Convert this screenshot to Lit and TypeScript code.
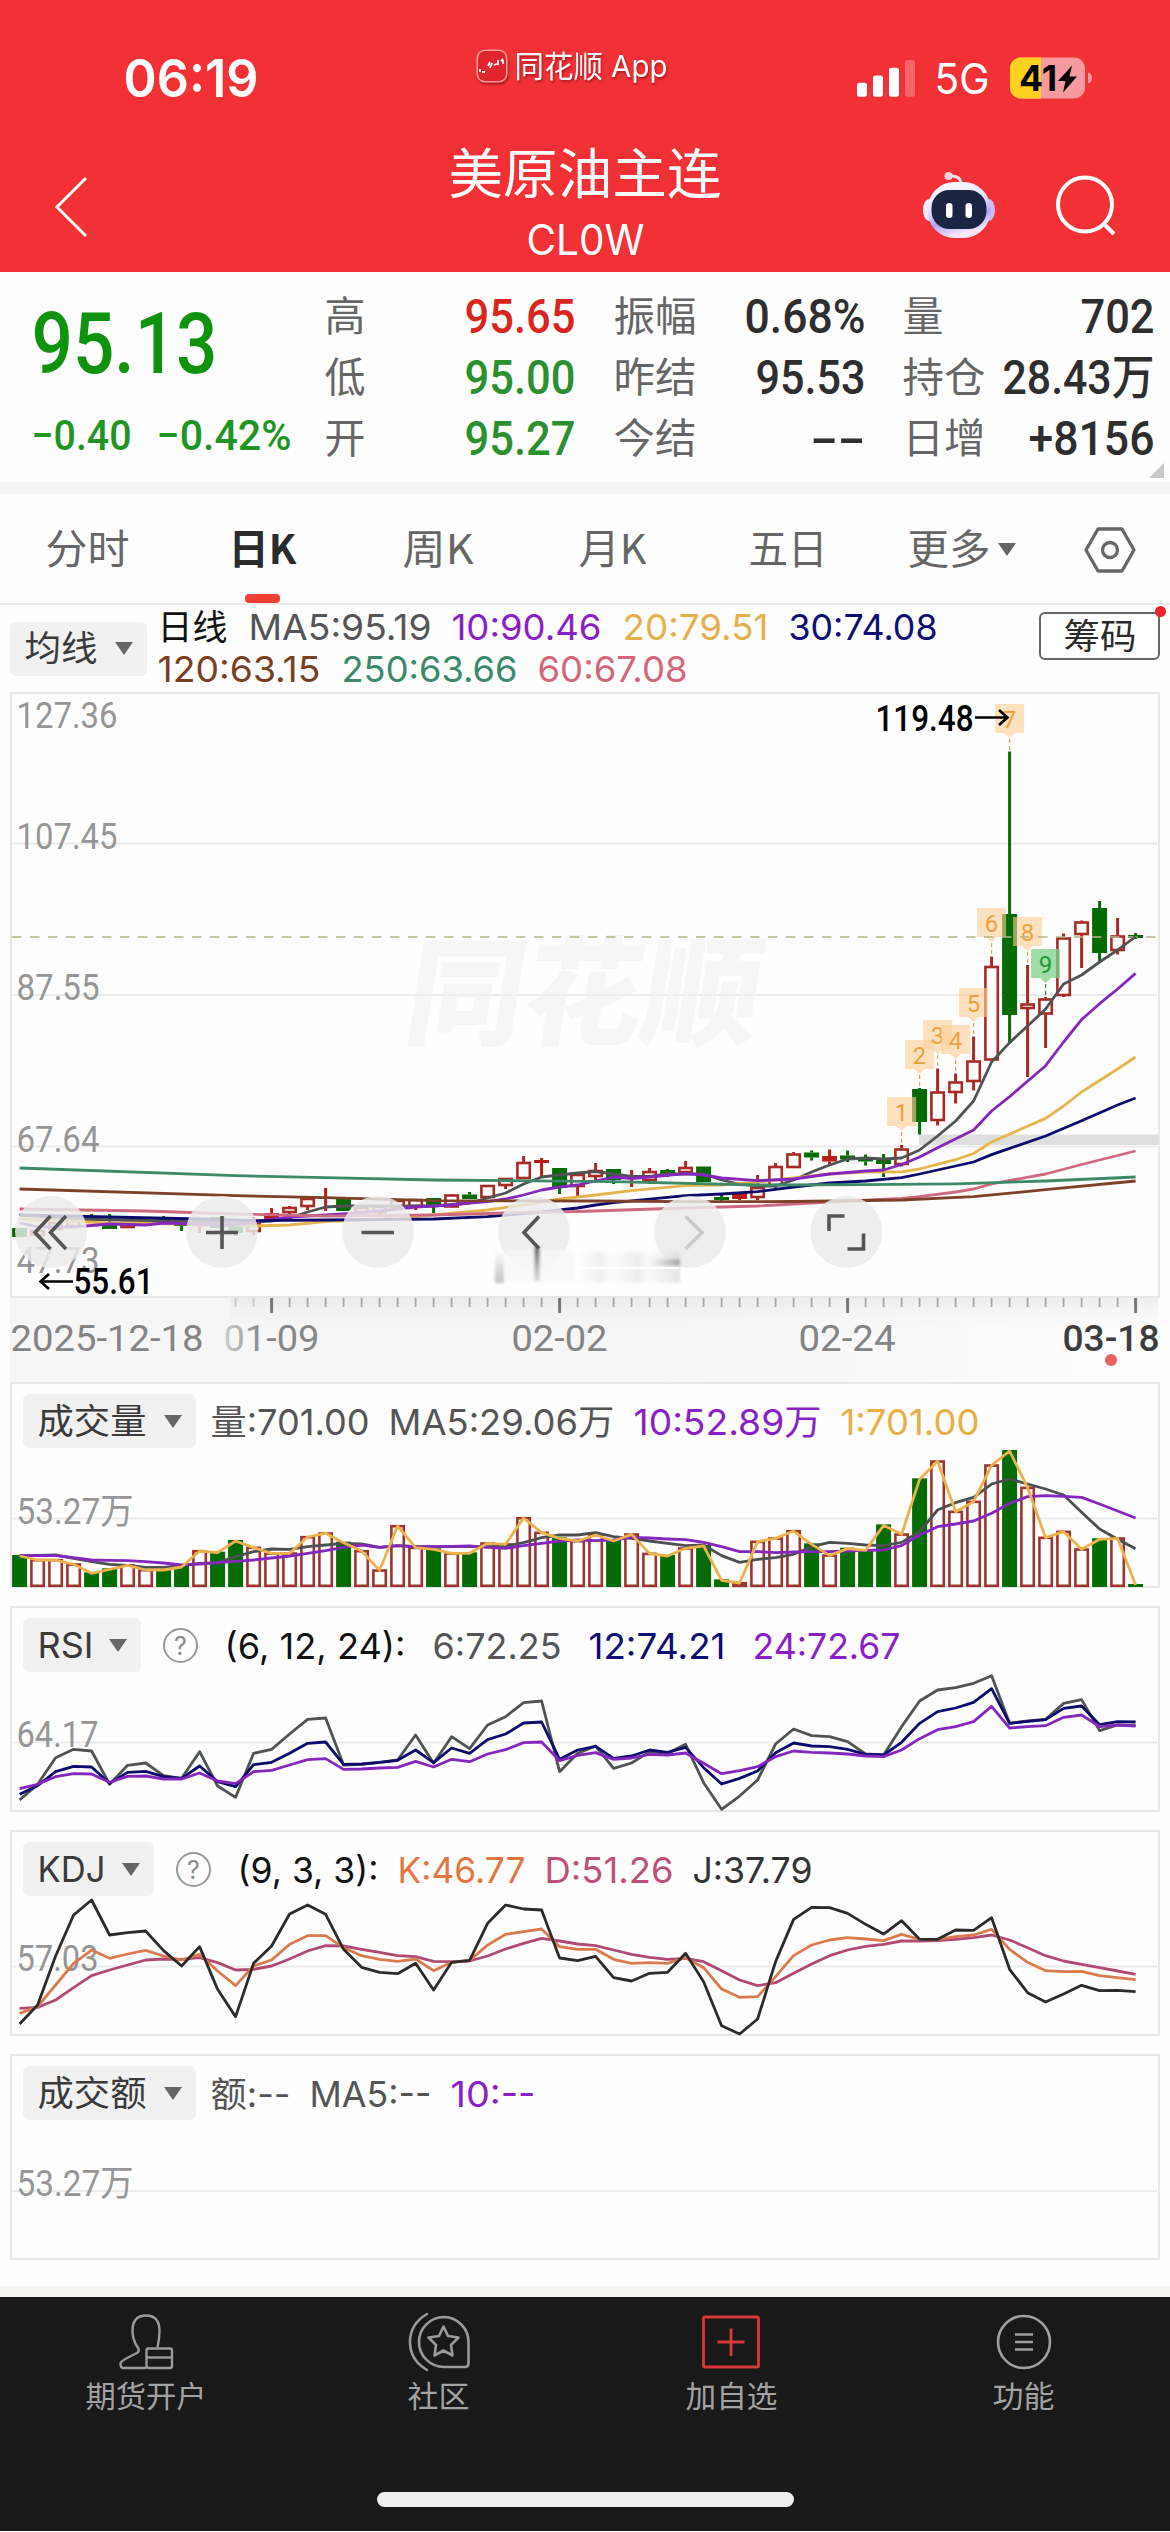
import { LitElement, html, svg, css, nothing } from "lit";
import { customElement } from "lit/decorators.js";

/* ---------- data ---------- */

type Candle = [kind: "r" | "f" | "g", top: number, bottom: number, high: number, low: number];
type Pt = [number, number];

const X0 = 19.6;
const STEP = 18;
const xAt = (i: number) => X0 + STEP * i;

// r = hollow rising bar, f = filled rising bar, g = falling bar
const CANDLES: Candle[] = [
  ["g", 1228, 1237, 1228, 1237], ["r", 1230, 1236, 1230, 1236], ["r", 1222, 1230, 1222, 1230], ["r", 1220, 1227, 1220, 1227],
  ["g", 1217, 1223, 1214, 1223], ["g", 1222, 1229, 1214, 1229], ["r", 1222, 1228, 1222, 1228], ["r", 1220, 1224, 1220, 1224],
  ["g", 1218, 1223, 1216, 1223], ["g", 1223, 1226, 1223, 1231], ["r", 1221, 1226, 1221, 1233], ["g", 1217, 1228, 1217, 1228],
  ["g", 1223, 1233, 1223, 1236], ["r", 1223, 1232, 1217, 1235], ["f", 1213, 1219, 1208, 1219], ["r", 1207, 1213, 1206, 1217],
  ["r", 1198, 1207, 1196, 1210], ["f", 1197, 1199, 1188, 1211], ["g", 1197, 1211, 1197, 1211], ["r", 1207, 1213, 1205, 1213],
  ["r", 1206, 1213, 1206, 1215], ["r", 1200, 1208, 1200, 1208], ["r", 1199, 1207, 1199, 1210], ["g", 1198, 1207, 1198, 1213],
  ["r", 1194.5, 1207.5, 1194, 1208], ["g", 1194.5, 1199, 1192, 1199], ["r", 1185, 1198, 1185, 1198], ["r", 1178, 1186, 1178, 1189],
  ["r", 1162, 1179, 1156, 1179], ["f", 1160, 1163, 1158, 1177], ["g", 1168, 1188, 1168, 1194], ["r", 1174, 1187, 1174, 1196],
  ["r", 1170, 1177, 1163, 1181], ["g", 1169, 1180, 1169, 1184], ["f", 1177, 1179, 1170, 1187], ["r", 1171, 1181, 1168, 1184],
  ["g", 1170, 1174, 1169, 1177], ["r", 1167, 1173, 1161, 1173], ["g", 1166.5, 1182, 1166.5, 1182], ["g", 1197, 1200, 1195, 1202],
  ["f", 1193, 1199, 1193, 1200], ["r", 1187, 1198, 1175, 1200], ["r", 1166, 1186, 1163, 1188], ["r", 1153.5, 1168, 1152, 1168],
  ["g", 1152.5, 1157.5, 1150.5, 1160.5], ["f", 1156, 1161.5, 1149.5, 1164.5], ["g", 1155.5, 1159.5, 1150.5, 1162], ["g", 1157.5, 1161.5, 1154.5, 1165.5],
  ["g", 1159.5, 1164, 1154, 1177], ["r", 1148.5, 1165, 1145, 1166.5], ["g", 1089, 1122, 1088, 1134.5], ["r", 1091.5, 1121, 1068.5, 1125.5],
  ["r", 1081.5, 1093, 1073.5, 1103.5], ["r", 1060.5, 1082, 1036.5, 1090.5], ["r", 966, 1060.5, 956.5, 1061], ["g", 914, 1015, 751.5, 1043],
  ["r", 1003.5, 1009, 965, 1077], ["r", 998.5, 1014.5, 997, 1048], ["r", 937.5, 996, 933.5, 997], ["r", 921.5, 935, 920.5, 968],
  ["g", 908, 953, 901, 961], ["r", 935.5, 951, 918, 954.5], ["g", 935, 938, 933, 939],
];

const MA_LINES: { color: string; pts: Pt[] }[] = [
  { color: "#505353", pts: [[0,1215],[3,1219],[8,1221],[12,1223],[14,1221],[15,1218],[16,1212],[17,1207],[18,1206],[21,1206],[23,1206],[25,1203],[26,1198],[27,1193],[28,1184],[29,1177],[30,1175],[31,1173],[32,1171.5],[33,1174],[34,1176.5],[35,1176.5],[36,1174],[38,1174],[39,1180],[40,1184],[41,1186],[42,1186],[43,1180],[44,1172],[45,1165],[46,1159],[47,1158],[48,1159],[49,1158],[50,1150],[51,1136],[52,1121],[53,1101],[54,1062],[55,1042.6],[56,1026],[57,1009],[58,984],[59,975],[60,962],[61,950],[62,936.6]] },
  { color: "#e6b54e", pts: [[0,1219],[5,1223],[10,1224],[13,1226],[15,1225],[17,1221.7],[21,1218],[23,1215],[26,1210],[28,1205],[30,1199],[32,1195],[34,1190.7],[37,1185.7],[39,1185],[41,1182],[43,1178],[45,1174],[47,1172],[49,1171.8],[50,1169],[52,1159.7],[53,1153.5],[54,1142],[57,1118.4],[58,1106],[59,1092],[61,1069],[62,1057]] },
  { color: "#8527bd", pts: [[0,1223],[1,1226.7],[3,1227],[5,1224],[7,1225],[8,1223],[10,1224],[12,1225],[13,1222],[15,1217],[17,1215],[19,1212.7],[21,1209],[22,1207],[24,1205],[25,1203],[26,1201.7],[27,1199],[28,1195],[29,1190],[30,1187],[31,1185],[32,1181],[33,1177],[34,1178.5],[35,1177],[37,1173.7],[38,1175],[39,1178],[41,1180.7],[43,1179],[45,1174],[47,1171],[48,1170],[49,1164.5],[50,1157],[51,1147.7],[53,1130],[54,1111],[55,1096.7],[57,1065.7],[58,1042],[59,1019.6],[60,1003.7],[61,989],[62,973.4]] },
  { color: "#0d0b6b", pts: [[0,1215],[5,1217],[10,1219],[13,1220.7],[17,1220],[23,1219],[26,1216.7],[29,1212],[31,1208],[32,1205],[33,1202.7],[37,1195.7],[39,1194],[41,1191.7],[43,1187],[45,1183],[47,1181],[49,1177.7],[50,1174],[52,1166],[53,1162],[54,1154.6],[57,1136],[59,1120.8],[61,1105],[62,1098]] },
  { color: "#cd6a7f", pts: [[0,1209],[7,1211],[12,1214],[17,1216],[23,1215],[27,1213],[31,1211.5],[37,1208],[41,1206],[45,1202],[49,1198.5],[50,1196.6],[52,1192],[53,1189],[54,1183.8],[57,1174],[59,1164.5],[62,1151]] },
  { color: "#7e4128", pts: [[0,1189],[12,1195.7],[17,1197.7],[23,1200.7],[32,1201],[37,1201.7],[43,1201.5],[47,1200.5],[49,1200],[53,1196.6],[57,1189.7],[62,1181]] },
  { color: "#3c8a68", pts: [[0,1168],[12,1175.7],[17,1177.7],[23,1180],[33,1181.7],[41,1185],[47,1184.7],[52,1183.8],[57,1181],[62,1177]] },
];

const MARKERS: [index: number, top: number, n: string][] = [
  [49, 1097, "1"], [50, 1040, "2"], [51, 1020, "3"], [52, 1025, "4"], [53, 988, "5"], [54, 908, "6"], [55, 704, "7"], [56, 917, "8"], [57, 949, "9"],
];

// Oscillator and volume samples, in thirds of a pixel below the panel's base line.
const VOL_TOPS = [525,537,537,550,577,565,553,567,567,558,510,515,480,500,517,517,468,457,485,510,568,435,500,505,517,517,487,490,411,455,472,480,462,480,460,518,525,502,495,598,606,482,472,450,490,523,503,508,433,460,295,241,392,362,253,210,320,470,452,505,475,472,612];
const VOL_MA5 = [527,526,525,535,545,553,556,562,562,556,550,548,530,515,507,508,500,495,490,492,502,497,500,500,500,500,500,498,488,473,465,465,458,470,475,483,490,497,495,527,547,538,533,523,500,487,490,495,497,487,455,390,368,352,312,297,312,327,345,397,447,478,506];
const VOL_MA10 = [527,527,527,533,540,541,542,545,549,555,552,548,544,540,534,528,520,512,502,495,502,497,500,500,499,498,502,505,497,490,483,480,482,480,472,474,477,479,487,500,515,515,518,516,515,515,513,511,510,497,465,440,432,423,400,370,350,347,349,352,372,393,414];
const RSI6 = [600,553,473,448,453,553,496,489,527,535,455,558,592,460,448,402,358,354,495,493,487,480,405,490,410,446,375,350,308,303,515,460,438,505,489,455,460,433,548,628,588,540,432,387,407,410,425,462,465,380,303,270,263,250,227,370,363,358,310,299,392,375,377];
const RSI12 = [583,557,515,499,501,550,517,514,530,535,498,545,560,494,487,460,430,426,493,492,487,481,450,488,444,460,419,402,369,366,478,450,439,475,468,450,457,442,503,552,535,513,458,429,438,440,448,463,465,427,370,335,324,307,266,370,364,359,325,318,374,365,366];
const RSI24 = [566,553,530,521,522,547,529,528,537,537,519,543,551,515,511,495,479,476,508,507,504,502,484,501,478,485,462,449,428,426,482,466,458,478,474,463,465,459,490,521,512,500,470,453,457,459,462,468,470,450,416,389,380,365,319,384,380,377,352,345,380,375,378];
const KDJ_J = [1272,1215,1068,945,900,1005,998,993,1052,1098,1040,1168,1250,1090,1038,942,915,943,1048,1102,1117,1121,1090,1170,1087,1081,970,915,927,930,1074,1082,1069,1133,1143,1120,1117,1060,1145,1277,1302,1257,1085,958,922,923,940,973,1002,962,1018,1018,990,991,953,1108,1178,1206,1182,1156,1172,1171,1175];
const KDJ_K = [1240,1220,1155,1090,1050,1075,1062,1051,1068,1080,1063,1113,1157,1098,1080,1033,1007,1007,1043,1067,1078,1084,1077,1112,1087,1082,1035,1003,995,987,1040,1048,1048,1078,1090,1088,1090,1073,1103,1167,1192,1190,1130,1067,1035,1020,1013,1017,1022,1003,1018,1018,1010,1005,988,1048,1087,1112,1115,1114,1127,1133,1139];
const KDJ_D = [1225,1222,1200,1163,1127,1110,1095,1080,1077,1078,1073,1088,1110,1108,1098,1077,1053,1037,1038,1048,1057,1067,1070,1084,1085,1083,1068,1047,1030,1015,1023,1032,1037,1050,1063,1072,1078,1075,1085,1112,1140,1157,1148,1120,1092,1067,1050,1039,1033,1023,1023,1022,1018,1013,1005,1020,1043,1067,1083,1093,1103,1113,1123];

/* ---------- drawing helpers ---------- */

/** Real text squeezed or stretched to an exact width, centred on its cap height. */
const fit = (text: string, w: number, size: number, cls = "") => {
  const h = Math.round(size * 1.1);
  return html`<svg class="fit" width=${w} height=${h} viewBox="0 0 ${w} ${h}">
    <text class=${cls} x="-1.5" y=${h / 2 + size * 0.36} font-size=${size} textLength=${w + 3} lengthAdjust="spacingAndGlyphs">${text}</text>
  </svg>`;
};

const label = (text: string, x: number, y: number, w: number, cls = "axis") =>
  svg`<text class=${cls} x=${x - 1.5} y=${y} textLength=${w + 3} lengthAdjust="spacingAndGlyphs">${text}</text>`;

const poly = (pts: Pt[], color: string) =>
  svg`<polyline class="line" stroke=${color} points=${pts.map(([i, y]) => `${xAt(i)},${y}`).join(" ")}></polyline>`;

const series = (vals: number[], base: number, color: string) =>
  poly(vals.map((v, i) => [i, base + v / 3] as Pt), color);

const canvas = (top: number, h: number, body: unknown) =>
  html`<svg class="canvas" width="1146" height=${h - 4} viewBox="12 ${top + 2} 1146 ${h - 4}">${body}</svg>`;

const GREEN = "#056b04";
const RED = "#a82a25";

const candle = ([k, t, b, hi, lo]: Candle, i: number) => {
  const x = xAt(i);
  const color = k === "g" ? GREEN : k === "f" ? "#b81d17" : RED;
  return svg`
    ${hi < t ? svg`<rect x=${x - 1.5} y=${hi} width="3" height=${t - hi} fill=${color}></rect>` : nothing}
    ${lo > b ? svg`<rect x=${x - 1.5} y=${b} width="3" height=${lo - b} fill=${color}></rect>` : nothing}
    ${k === "r"
      ? svg`<rect x=${x - 6.2} y=${t + 1} width="12.4" height=${Math.max(b - t - 2, 2)} fill="#fff" stroke=${color} stroke-width="2.6"></rect>`
      : svg`<rect x=${x - 7.5} y=${t} width="15" height=${b - t} fill=${color}></rect>`}`;
};

const marker = ([i, top, n]: [number, number, string]) => {
  const x = xAt(i);
  const green = n === "9";
  const fill = green ? "#7fd08a" : "#fbcf97";
  return svg`
    <path d="M${x - 14.5} ${top}h29v29h-9l-5.5 5l-5.5 -5h-9z" fill=${fill} opacity=${green ? 0.75 : 0.62}></path>
    <path d="M${x} ${top + 35}V${Math.max(CANDLES[i][3], top + 38)}" stroke=${green ? "#2f8f3f" : "#dba24f"} stroke-width="1.2" stroke-dasharray="4 3"></path>
    <text class="mark" x=${x} y=${top + 23.5} fill=${green ? "#1d9a35" : "#eda13d"}>${n}</text>`;
};

const chip = (text: string, w: number, textW: number) => html`
  <div class="chip" style="width:${w}px">${fit(text, textW, 35.5, "ui dark")}<i class="caret"></i></div>`;

const leg = (text: string, w: number, color: string) => html`<span style="color:${color}">${fit(text, w, 35.5, "ui")}</span>`;

/* ---------- component ---------- */

@customElement("app-root")
export class AppRoot extends LitElement {
  static styles = css`
    :host { display: block; width: 1170px; height: 2532px; overflow: hidden; background: #fefefe; font-family: Inter, "Noto Sans CJK SC", sans-serif; }
    * { box-sizing: border-box; }
    svg { display: block; flex: none; overflow: visible; }
    .ui { font-family: Inter, "Noto Sans CJK SC", sans-serif; fill: currentColor; }
    .num { font-family: Roboto, "Noto Sans CJK SC", sans-serif; fill: currentColor; font-weight: 500; }
    .cjk { font-family: "Noto Sans CJK SC", sans-serif; fill: currentColor; }
    .bold { font-weight: 700; }
    .semi { font-weight: 600; }
    .dark { fill: #3a3a3a; }
    .axis { font-family: Roboto, "Noto Sans CJK SC", sans-serif; font-size: 36px; fill: #969696; }
    .date { font-family: Roboto, sans-serif; font-size: 36px; fill: #848484; }
    .today { font-family: Roboto, sans-serif; font-size: 36px; fill: #3d3d3d; font-weight: 500; }
    .price { font-family: Roboto, sans-serif; font-size: 36px; font-weight: 500; fill: #000; }
    .mark { font-family: Roboto, sans-serif; font-size: 24px; text-anchor: middle; }
    .wm { font-family: "Noto Sans CJK SC", sans-serif; font-weight: 900; font-size: 118px; fill: #f6f6f6; }
    .line { fill: none; stroke-width: 2.8; stroke-linejoin: round; }

    header { height: 272px; background: #f13136; color: #fff; }
    .status { height: 136px; padding: 20px 0 0 125px; display: flex; align-items: center; }
    .brand { display: flex; align-items: center; gap: 8px; margin: 0 191px 24px 219px; filter: drop-shadow(1px 2px 1px rgba(90, 0, 0, 0.45)); }
    .sig { margin-right: 21px; }
    .bat { margin-left: 22px; }
    .nav { height: 136px; padding: 0 53px 0 55px; display: grid; grid-template-columns: 394px 272px 396px; align-items: center; }
    .back { margin-top: 5px; }
    .title { display: flex; flex-direction: column; align-items: center; gap: 13px; }
    .acts { display: flex; justify-content: flex-end; align-items: center; gap: 60px; padding-top: 2px; }

    .quote { height: 210px; padding: 13px 0 0 33px; display: grid; grid-template-columns: 293px 248px 249px 249px; column-gap: 0; color: #2e2e2e; position: relative; }
    .main { display: flex; flex-direction: column; color: #0f930f; padding-top: 10px; }
    .main .sub { display: flex; gap: 28px; padding-top: 22px; color: #1f9624; }
    .col { display: grid; grid-template-rows: repeat(3, 61px); }
    .col + .col { margin-left: 41px; margin-right: -41px; }
    .col.c2 { margin-left: 0; margin-right: 0; }
    .col.c4 { margin-left: 81px; margin-right: -81px; }
    .kv { display: flex; align-items: center; justify-content: space-between; }
    .k { color: #666; padding-top: 2px; }
    .up { color: #d8261f; }
    .down { color: #2b902d; }
    .corner { position: absolute; left: 1149px; top: 191px; }

    .band { height: 12px; background: #f5f5f5; }
    .tabs { height: 111px; display: grid; grid-template-columns: repeat(6, 175px) 120px; border-bottom: 2px solid #ececec; color: #666; }
    .tab { display: flex; align-items: center; justify-content: center; gap: 9px; position: relative; padding-top: 2px; }
    .on { color: #2b2b2b; }
    .bar { position: absolute; left: 70px; top: 100px; width: 35px; height: 9px; border-radius: 4px; background: #ef4034; }
    .caret { width: 0; height: 0; border: 9.5px solid transparent; border-top: 13px solid #666; border-bottom: 0; }

    .legend { height: 87px; padding-left: 10px; display: flex; align-items: center; }
    .chip { height: 54px; border-radius: 6px; background: #f1f1f1; display: flex; align-items: center; justify-content: space-between; padding: 0 14px 0 16px; flex: none; }
    .rows { width: 880px; margin-left: 12px; display: flex; flex-direction: column; gap: 3px; }
    .row { display: flex; align-items: center; gap: 23.5px; }
    .chips { position: relative; width: 121px; height: 48px; margin: -25px 0 0 0; border: 2px solid #666; border-radius: 6px; display: flex; align-items: center; justify-content: center; color: #2b2b2b; background: #fff; }
    .dot { position: absolute; right: -8px; top: -8px; width: 11px; height: 11px; border-radius: 50%; background: #e8262b; }

    .panel { position: relative; width: 1150px; margin-left: 10px; border: 2px solid #e7e7e7; }
    .canvas { position: absolute; left: 0; top: 0; }
    .chart { height: 606px; }
    .dates { width: 1150px; height: 84px; margin-left: 10px; background: linear-gradient(90deg, #f6f6f6 55%, #fdfdfd); }
    .sub-panel { height: 206px; }
    .gap { margin-top: 18px; }
    .head { position: relative; z-index: 1; display: flex; align-items: center; gap: 22px; padding: 10px 0 0 11px; }
    .head > span { padding-top: 2px; }
    .near { margin-left: -6px; }
    .wide { margin-left: 8px; }
    .mr { margin-left: 6px; }
    .head > .q { padding-top: 0; width: 35px; height: 35px; border: 2px solid #999; border-radius: 50%; color: #8c8c8c; font-size: 25px; line-height: 32px; text-align: center; flex: none; }
    .foot-gap { height: 26px; }
    .foot-band { height: 11px; background: #f5f5f3; }

    footer { height: 234px; background: #191919; color: #a3a3a3; display: flex; flex-direction: column; }
    .menu { height: 195px; display: grid; grid-template-columns: repeat(4, 1fr); }
    .item { display: flex; flex-direction: column; align-items: center; padding-top: 15px; gap: 8px; }
    .home { width: 417px; height: 15px; border-radius: 8px; background: #efefef; align-self: center; }
  `;

  private header() {
    return html`<header>
      <div class="status">
        ${fit("06:19", 132, 52.5, "ui semi")}
        <div class="brand">
          <svg width="32" height="34" viewBox="0 0 32 34">
            <rect x="1.2" y="1.2" width="29.6" height="31.6" rx="8" fill="#e0262c" stroke="#ff9c98" stroke-width="1.6"></rect>
            <path d="M4 23v-3M6 23h3M12 17l2-4M14 19l2-5M18 16l3-1M22 16v-5M25 12l2-2M27 15v-4" stroke="#fff" stroke-width="1.8" fill="none"></path>
          </svg>
          ${fit("同花顺 App", 150, 30, "ui")}
        </div>
        <svg class="sig" width="58" height="38" viewBox="856 58 58 38" fill="#fff">
          <rect x="856" y="81.7" width="10" height="14" rx="2.5"></rect>
          <rect x="872" y="74.5" width="10" height="21.2" rx="2.5"></rect>
          <rect x="888" y="66.7" width="10" height="29" rx="2.5"></rect>
          <rect x="904" y="59" width="10" height="36.7" rx="2.5" opacity="0.25"></rect>
        </svg>
        ${fit("5G", 52, 43, "ui")}
        <svg class="bat" width="83" height="42" viewBox="1009 56.5 83 42">
          <rect x="1009" y="57" width="75" height="41" rx="11" fill="#f79aa0"></rect>
          <path d="M1040 57h-20a11 11 0 0 0 -11 11v19a11 11 0 0 0 11 11h20z" fill="#ffd21f"></path>
          <path d="M1087 72q4 1 4 5.500t-4 5.500z" fill="#f79aa0"></path>
          <text class="ui bold" x="1018" y="90.500" font-size="36" textLength="38" lengthAdjust="spacingAndGlyphs" style="fill:#000">41</text>
          <path d="M1071 65l-14 15.500h7.500l-2.500 11.500l14 -16h-7.500z" fill="#000"></path>
        </svg>
      </div>
      <div class="nav">
        <svg class="back" width="34" height="62" viewBox="0 0 34 62" fill="none" stroke="#fff" stroke-width="3"><path d="M31 2L2 31L31 60"></path></svg>
        <div class="title">${fit("美原油主连", 270, 54, "cjk")}${fit("CL0W", 115, 42, "ui")}</div>
        <div class="acts">
          <svg width="73" height="68" viewBox="920 170 73 68">
            <defs><linearGradient id="rb" x1="0" y1="0" x2="0.3" y2="1"><stop offset="0" stop-color="#fff"></stop><stop offset="0.5" stop-color="#e6e2ff"></stop><stop offset="0.75" stop-color="#a9a6f5"></stop><stop offset="1" stop-color="#fbe6f8"></stop></linearGradient></defs>
            <path d="M947 175q11 -1 12 7" fill="none" stroke="#ffdfe6" stroke-width="3"></path><circle cx="946.500" cy="175" r="4" fill="#ffd5de"></circle>
            <ellipse cx="927" cy="209" rx="6" ry="11" fill="#f3edff"></ellipse><ellipse cx="987" cy="209" rx="6" ry="11" fill="#c9bdf6"></ellipse>
            <rect x="925.500" y="181" width="63" height="56" rx="27" fill="url(#rb)"></rect>
            <rect x="929.500" y="189" width="55" height="39" rx="18" fill="#1c2444"></rect>
            <rect x="944" y="202" width="6.500" height="15" rx="3.200" fill="#fff"></rect><rect x="963.500" y="202" width="6.500" height="15" rx="3.200" fill="#fff"></rect>
          </svg>
          <svg width="62" height="62" viewBox="1055 174 62 62" fill="none" stroke="#fff" stroke-width="4"><circle cx="1085" cy="204.500" r="27"></circle><path d="M1103 223L1114 234"></path></svg>
        </div>
      </div>
    </header>`;
  }

  private kv(k: string, kw: number, v: string, vw: number, cls = "") {
    return html`<div class="kv"><span class="k">${fit(k, kw, 41, "cjk")}</span><span class=${cls}>${fit(v, vw, 48, "num")}</span></div>`;
  }

  private quote() {
    return html`<section class="quote">
      <div class="main">
        ${fit("95.13", 183, 85, "num")}
        <div class="sub">${fit("−0.40", 97, 43, "num")}${fit("−0.42%", 132, 43, "num")}</div>
      </div>
      <div class="col c2">${this.kv("高", 38, "95.65", 108, "up")}${this.kv("低", 38, "95.00", 108, "down")}${this.kv("开", 38, "95.27", 108, "down")}</div>
      <div class="col">${this.kv("振幅", 80, "0.68%", 118)}${this.kv("昨结", 80, "95.53", 107)}${this.kv("今结", 80, "--", 52)}</div>
      <div class="col c4">${this.kv("量", 38, "702", 71)}${this.kv("持仓", 80, "28.43万", 149)}${this.kv("日增", 80, "+8156", 123)}</div>
      <svg class="corner" width="15" height="15"><path d="M15 0V15H0Z" fill="#c9c9c9"></path></svg>
    </section>`;
  }

  private tabs() {
    return html`<div class="band"></div>
      <nav class="tabs">
        <div class="tab">${fit("分时", 81, 41, "cjk")}</div>
        <div class="tab on">${fit("日K", 65, 41, "cjk bold")}<i class="bar"></i></div>
        <div class="tab">${fit("周K", 68, 41, "cjk")}</div>
        <div class="tab">${fit("月K", 65, 41, "cjk")}</div>
        <div class="tab">${fit("五日", 76, 41, "cjk")}</div>
        <div class="tab">${fit("更多", 80, 41, "cjk")}<i class="caret"></i></div>
        <div class="tab"><svg width="52" height="46" viewBox="0 0 52 46" fill="none" stroke="#666" stroke-width="3.300" stroke-linejoin="round"><path d="M14 2H38L50 23L38 44H14L2 23Z"></path><circle cx="26" cy="23" r="7.500"></circle></svg></div>
      </nav>
      <div class="legend">
        ${chip("均线", 137, 70)}
        <div class="rows">
          <div class="row">${leg("日线", 67, "#111")}${leg("MA5:95.19", 180, "#555")}${leg("10:90.46", 147, "#8a1fc8")}${leg("20:79.51", 143, "#e3b04b")}${leg("30:74.08", 146, "#0f0c74")}</div>
          <div class="row">${leg("120:63.15", 160, "#7a3f22")}${leg("250:63.66", 173, "#3a8a6a")}${leg("60:67.08", 147, "#d4667c")}</div>
        </div>
        <div class="chips">${fit("筹码", 70, 35, "cjk")}<i class="dot"></i></div>
      </div>`;
  }

  private tools() {
    return svg`
      ${[51, 222, 378, 534, 690, 846.5].map((x) => svg`<circle cx=${x} cy="1232" r="36" fill="#ebebeb" opacity="0.84"></circle>`)}
      <g fill="none" stroke="#555" stroke-width="3.6">
        <path d="M50.500 1216L35 1232.500L50.500 1249M66 1216L50.500 1232.500L66 1249"></path>
        <path d="M206 1232.500H238M222 1216V1249"></path>
        <path d="M361.500 1232.500H394"></path>
        <path d="M539 1216.500L524 1232.500L539 1248.500"></path>
        <path stroke="#c9c9c9" d="M685.500 1216.500L702 1232.500L685.500 1249"></path>
        <path d="M829 1231V1216H844.500M863.500 1233.500V1249H847.500"></path>
      </g>`;
  }

  private smudge() {
    return svg`<defs>
        <linearGradient id="sd" x1="0" y1="0" x2="0" y2="1"><stop offset="0" stop-color="#999" stop-opacity="0"></stop><stop offset="1" stop-color="#999" stop-opacity="0.6"></stop></linearGradient>
        <linearGradient id="su" x1="0" y1="0" x2="0" y2="1"><stop offset="0" stop-color="#444" stop-opacity="0.9"></stop><stop offset="1" stop-color="#aaa" stop-opacity="0.4"></stop></linearGradient>
        <linearGradient id="sh" x1="0" y1="0" x2="1" y2="0"><stop offset="0" stop-color="#eee" stop-opacity="0"></stop><stop offset="0.25" stop-color="#e6e6e6" stop-opacity="0.6"></stop><stop offset="0.33" stop-color="#f4f4f4" stop-opacity="0.3"></stop><stop offset="0.6" stop-color="#e2e2e2" stop-opacity="0.6"></stop><stop offset="0.7" stop-color="#f2f2f2" stop-opacity="0.4"></stop><stop offset="1" stop-color="#d9d9d9" stop-opacity="0.7"></stop></linearGradient>
        <linearGradient id="sb" x1="0" y1="0" x2="1" y2="0"><stop offset="0.6" stop-color="#aaa" stop-opacity="0"></stop><stop offset="1" stop-color="#8f8f8f" stop-opacity="0.7"></stop></linearGradient>
        <filter id="bl" x="-50%" y="-10%" width="200%" height="120%"><feGaussianBlur stdDeviation="1.600"></feGaussianBlur></filter>
      </defs>
      <g filter="url(#bl)">
        <rect x="495" y="1250" width="9" height="33" fill="url(#sd)"></rect>
        <rect x="505" y="1250" width="70" height="33" fill="#f8f8f8" opacity="0.8"></rect>
        <rect x="534.500" y="1247" width="5" height="34" fill="url(#su)"></rect>
        <rect x="575" y="1252" width="105" height="31" fill="url(#sh)"></rect>
        <rect x="600" y="1259" width="80" height="7" fill="url(#sb)"></rect>
      </g>
      <path d="M574 1268H679" stroke="#fff" stroke-width="2"></path>`;
  }

  private mainChart() {
    return html`<section class="panel chart">${canvas(692, 606, svg`
      ${[843.5, 995, 1146.5].map((y) => svg`<path d="M12 ${y}H1157" stroke="#ebebeb" stroke-width="2"></path>`)}
      <g transform="translate(413 1036) skewX(-9)"><text class="wm" x="-12" y="0" textLength="354" lengthAdjust="spacingAndGlyphs">同花顺</text></g>
      <path d="M12 995H1157" stroke="#ececec" stroke-width="1.500"></path>
      ${label("127.36", 18, 728, 98)}${label("107.45", 18, 849, 98)}${label("87.55", 18, 1000, 80)}${label("67.64", 18, 1152, 80)}${label("47.73", 18, 1273, 80)}
      <rect x="919" y="1134.500" width="239" height="10.500" fill="#dedede"></rect>
      ${CANDLES.map(candle)}
      ${MARKERS.map(marker)}
      <path d="M12 937H1157" stroke="#b5b38a" stroke-width="1.600" stroke-dasharray="9.500 8.500"></path>
      ${MA_LINES.map((m) => poly(m.pts, m.color))}
      ${label("119.48", 877, 731, 95, "price")}
      <path d="M975 717.500H1007M999 710L1007.500 717.500L999 725" fill="none" stroke="#000" stroke-width="2.600"></path>
      ${this.tools()}
      ${this.smudge()}
      ${label("55.61", 75, 1294, 77, "price")}
      <path d="M73 1281.500H41M49 1274L40.500 1281.500L49 1289" fill="none" stroke="#000" stroke-width="2.600"></path>
    `)}</section>
    <div class="dates"><svg width="1150" height="84" viewBox="10 1298 1150 84">
      <defs>
        <linearGradient id="fd" gradientUnits="userSpaceOnUse" x1="215" y1="0" x2="262" y2="0"><stop offset="0" stop-color="#868686" stop-opacity="0.2"></stop><stop offset="1" stop-color="#868686"></stop></linearGradient>
        <linearGradient id="sh2" x1="0" y1="0" x2="0" y2="1"><stop offset="0" stop-color="#e4e4e4"></stop><stop offset="1" stop-color="#f5f5f5" stop-opacity="0"></stop></linearGradient>
      </defs>
      <rect x="230" y="1298" width="928" height="34" fill="url(#sh2)" opacity="0.6"></rect>
      ${CANDLES.map((_, i) => {
        if (i < 12) return nothing;
        const major = (i - 14) % 16 === 0;
        return svg`<path d="M${xAt(i)} 1298V${major ? 1313 : 1307}" stroke=${major ? "#777" : "#a5a5a5"} stroke-width=${major ? 3 : 1.8} opacity=${i < 14 ? 0.5 : 1}></path>`;
      })}
      ${label("2025-12-18", 12, 1351, 190, "date")}
      <text class="date" x="223.500" y="1350.500" textLength="96" lengthAdjust="spacingAndGlyphs" style="fill:url(#fd)">01-09</text>
      ${label("02-02", 513, 1350.5, 93, "date")}${label("02-24", 800, 1350.5, 94, "date")}${label("03-18", 1064, 1350.5, 94, "today")}
      <circle cx="1111" cy="1360" r="6" fill="#ea5f5f"></circle>
    </svg></div>`;
  }

  private volume() {
    return html`<section class="panel sub-panel">
      ${canvas(1382, 206, svg`
        <path d="M12 1518.500H1157" stroke="#ebebeb" stroke-width="2"></path>
        ${label("53.27万", 18, 1523.5, 114)}
        ${VOL_TOPS.map((v, i) => {
          const t = 1380 + v / 3;
          const x = xAt(i);
          return CANDLES[i][0] === "g"
            ? svg`<rect x=${x - 7.5} y=${t} width="15" height=${1587 - t} fill=${GREEN}></rect>`
            : svg`<rect x=${x - 6.2} y=${t + 1.2} width="12.400" height=${Math.max(1585.6 - t - 1, 1)} fill="#fff" stroke="#9c3531" stroke-width="2.600"></rect>`;
        })}
        ${series(VOL_MA5, 1380, "#4d5050")}
        ${series(VOL_MA10, 1380, "#8527bd")}
        ${series(VOL_TOPS.map((v) => v + 3), 1380, "#eeb24c")}
      `)}
      <div class="head">${chip("成交量", 173, 106)}<span class="near">${leg("量:701.00", 156, "#555")}</span>${leg("MA5:29.06万", 223, "#555")}${leg("10:52.89万", 185, "#8a1fc8")}${leg("1:701.00", 136, "#e8af45")}</div>
    </section>`;
  }

  private rsi() {
    return html`<section class="panel sub-panel gap">
      ${canvas(1606, 206, svg`
        <path d="M12 1742.500H1157" stroke="#ebebeb" stroke-width="2"></path>
        ${label("64.17", 18, 1747, 79)}
        ${series(RSI6, 1600, "#505353")}${series(RSI12, 1600, "#0d0b6b")}${series(RSI24, 1600, "#8527bd")}
      `)}
      <div class="head">${chip("RSI", 118, 53)}<span class="q">?</span><span class="mr">${leg("(6, 12, 24):", 178, "#111")}</span><span class="wide">${leg("6:72.25", 126, "#555")}</span><span class="wide">${leg("12:74.21", 134, "#0f0c74")}</span><span class="wide">${leg("24:72.67", 145, "#8a1fc8")}</span></div>
    </section>`;
  }

  private kdj() {
    return html`<section class="panel sub-panel gap">
      ${canvas(1830, 206, svg`
        <path d="M12 1966.500H1157" stroke="#ebebeb" stroke-width="2"></path>
        ${label("57.03", 18, 1971, 79)}
        ${series(KDJ_D, 1600, "#b04a74")}${series(KDJ_K, 1600, "#d97b4c")}${series(KDJ_J, 1600, "#2b2b2b")}
      `)}
      <div class="head">${chip("KDJ", 131, 65)}<span class="q">?</span><span class="mr">${leg("(9, 3, 3):", 138, "#111")}</span>${leg("K:46.77", 125, "#e5763f")}${leg("D:51.26", 126, "#bd4f7a")}${leg("J:37.79", 117, "#333")}</div>
    </section>`;
  }

  private turnover() {
    return html`<section class="panel sub-panel gap">
      ${canvas(2054, 206, svg`
        <path d="M12 2191H1157" stroke="#ebebeb" stroke-width="2"></path>
        ${label("53.27万", 18, 2196, 114)}
      `)}
      <div class="head">${chip("成交额", 173, 106)}<span class="near">${leg("额:--", 77, "#555")}</span>${leg("MA5:--", 119, "#555")}${leg("10:--", 82, "#8a1fc8")}</div>
    </section>`;
  }

  private footer() {
    return html`<footer>
      <div class="menu">
        <div class="item"><svg width="56" height="60" viewBox="117 2313 56 60" fill="none" stroke="#9a9a9a" stroke-width="2.400" stroke-linejoin="round"><path d="M145 2369H122Q119.500 2369 119.500 2364Q121 2361 136 2354Q139 2352 137 2349Q131.500 2341 131.500 2332Q131.500 2316.500 145 2316.500Q158.500 2316.500 158.500 2332Q158.500 2340 156.500 2348"></path><rect x="145.500" y="2349.500" width="25.500" height="19.500" rx="2"></rect><path d="M145.500 2358.500H171"></path></svg>${fit("期货开户", 118, 30, "cjk")}</div>
        <div class="item"><svg width="62" height="60" viewBox="408 2313 62 60" fill="none" stroke="#9a9a9a" stroke-width="2.600" stroke-linecap="round" stroke-linejoin="round"><path d="M427 2315Q410 2325 410 2343Q410 2361 427 2371"></path><path d="M444 2318A25 25 0 0 0 444 2368H465Q468.500 2368 468.500 2364V2343A25 25 0 0 0 444 2318Z"></path><path d="M443.500 2327.500L448 2337L458.500 2338.500L451 2346L452.500 2356.500L443.500 2351.500L434.500 2356.500L436 2346L428.500 2338.500L439 2337Z"></path></svg>${fit("社区", 59, 30, "cjk")}</div>
        <div class="item"><svg width="60" height="60" viewBox="701.500 2313 60 60" fill="none" stroke="#d83a37" stroke-width="2.800"><rect x="704" y="2318" width="55" height="50" rx="1.500"></rect><path d="M718 2343H745M731.500 2329.500V2357"></path></svg>${fit("加自选", 89, 30, "cjk")}</div>
        <div class="item"><svg width="60" height="60" viewBox="994 2313 60 60" fill="none" stroke="#a0a0a0" stroke-width="2.600"><circle cx="1024" cy="2343" r="26"></circle><path d="M1015 2335.500H1033M1015 2343H1033M1015 2350.500H1033"></path></svg>${fit("功能", 59, 30, "cjk")}</div>
      </div>
      <div class="home"></div>
    </footer>`;
  }

  render() {
    return html`${this.header()}${this.quote()}${this.tabs()}${this.mainChart()}${this.volume()}${this.rsi()}${this.kdj()}${this.turnover()}
      <div class="foot-gap"></div><div class="foot-band"></div>${this.footer()}`;
  }
}
